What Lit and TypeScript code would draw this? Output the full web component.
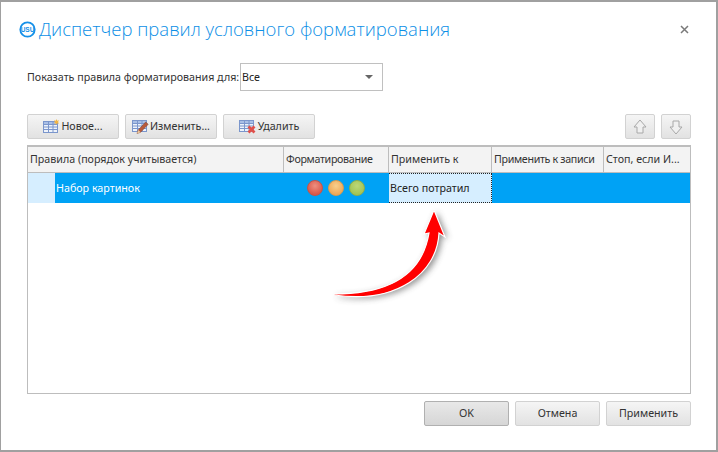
import { LitElement, html, css, svg } from "lit";
import { customElement } from "lit/decorators.js";

const tableBase = svg`<rect x="0.5" y="2.5" width="14" height="11" fill="#eef3fb" stroke="#7b96cc"/><rect x="0.5" y="2.5" width="14" height="3" fill="#a9bfe6" stroke="#7b96cc"/><path d="M5.5 3v10M10 3v10M1 8h13M1 10.5h13" stroke="#7b96cc" fill="none"/>`;

@customElement("app-root")
export class AppRoot extends LitElement {
  static styles = css`
    :host { display: block; width: 718px; height: 452px; box-sizing: border-box; background: #fff;
      border: 1px solid #a0a0a0; border-width: 2px 2px 2px 1px; position: relative;
      font-family: "Noto Sans", "DejaVu Sans", sans-serif; font-size: 10.7px; color: #333; overflow: hidden; }
    .page { display: flex; flex-direction: column; height: 100%; padding: 0 25px 0 26px; box-sizing: border-box; }
    .title { display: flex; align-items: center; height: 54px; margin-left: -8px; flex: none; }
    .title svg { flex: none; margin-right: 3px; margin-top: 1px; }
    .title h1 { margin: 0 0 1px; font: 300 18.5px "Open Sans", sans-serif; color: #0d8fe6; white-space: nowrap; flex: 1; }
    .close { flex: none; color: #7a7a7a; margin-right: -1px; display: flex; }
    .filter { display: flex; align-items: center; margin-top: 7px; height: 28px; flex: none; }
    .filter label { width: 213px; white-space: nowrap; padding-bottom: 1px; }
    .select { width: 143px; height: 28px; box-sizing: border-box; border: 1px solid #c0c0c0; display: flex; align-items: center;
      justify-content: space-between; padding: 0 9px 0 1px; color: #222; }
    .caret { width: 0; height: 0; border-left: 4px solid transparent; border-right: 4px solid transparent; border-top: 4px solid #666; }
    .toolbar { display: flex; gap: 6px; margin-top: 23px; flex: none; }
    .spacer { flex: 1; }
    .btn { height: 25px; box-sizing: border-box; border: 1px solid #d2d2d2; border-radius: 2px; display: flex; align-items: center;
      justify-content: center; background: linear-gradient(#f5f5f5, #e2e2e2); color: #333; white-space: nowrap; padding-bottom: 1px; }
    .tool { width: 92px; gap: 1px; }
    .arrow { width: 30px; padding-bottom: 0; }
    .table { margin-top: 6px; flex: none; height: 249px; box-sizing: border-box; border: 1px solid #bdbdbd; border-top-width: 2px; }
    .row { display: grid; grid-template-columns: 256px 105px 103px 112px 86px; }
    .head { height: 26px; box-sizing: border-box; background: #f3f3f3; border-bottom: 1px solid #bdbdbd; }
    .head div { border-right: 1px solid #bdbdbd; display: flex; align-items: center; padding: 0 0 1px 2px; white-space: nowrap; overflow: hidden; color: #333; }
    .head div:last-child { border-right: 0; }
    .head .tight { letter-spacing: -0.33px; }
    .sel { height: 30px; background: #00a2f5; display: grid; grid-template-columns: 27px 229px 105px 103px 198px; }
    .sel > div { display: flex; align-items: center; }
    .ind { background: #d6eeff; }
    .name { color: #fff; padding: 0 0 1px 1px; }
    .icons { justify-content: center; gap: 5px; padding-right: 1px; }
    .dot { width: 16px; height: 16px; border-radius: 50%; box-sizing: border-box; }
    .r { background: radial-gradient(circle at 50% 35%, #ee8f80, #d95a4c 70%); border: 1px solid #c75347; }
    .o { background: radial-gradient(circle at 50% 35%, #f8cf8c, #eeaa5a 70%); border: 1px solid #d99b50; }
    .g { background: radial-gradient(circle at 50% 35%, #bcd877, #a3c557 70%); border: 1px solid #8fae4b; }
    .cell { background: #d6eeff; color: #222; padding: 0 0 1px 1px; box-sizing: border-box; border: 1px dotted #222; border-width: 1px 1px 1px 0; }
    .footer { display: flex; gap: 6px; justify-content: flex-end; margin-top: 7px; flex: none; }
    .foot { width: 85px; }
    .ok { background: linear-gradient(#e8e8e8, #d6d6d6); border-color: #b0b0b0; }
    .overlay { position: absolute; left: 324px; top: 198px; pointer-events: none; overflow: visible; }
  `;

  render() {
    const d = "M333 292C378 292 420 280 428 231L423 232L433 208L444 235L438 231C436 272 395 302 333 293Z";
    return html`<div class="page">
      <div class="title">
        <svg width="17" height="17" viewBox="0 0 17 17"><circle cx="8.5" cy="8.5" r="7.2" fill="#fff" stroke="#1590e8" stroke-width="1.8"/><text x="8.5" y="11" text-anchor="middle" font-size="6.5" font-weight="700" font-family="Liberation Sans" fill="#1590e8">USU</text></svg>
        <h1>Диспетчер правил условного форматирования</h1>
        <span class="close"><svg width="9" height="9" viewBox="0 0 9 9"><path d="M1 1l7 7M8 1l-7 7" stroke="currentColor" stroke-width="1.5"/></svg></span>
      </div>
      <div class="filter"><label>Показать правила форматирования для:</label>
        <div class="select"><span>Все</span><span class="caret"></span></div></div>
      <div class="toolbar">
        <div class="btn tool"><svg width="17" height="15" viewBox="0 0 17 15">${tableBase}<path d="M13.5 0l.7 1.8 1.8-.6-.9 1.8.9 1.8-1.8-.6-.7 1.8-.7-1.8-1.8.6.9-1.8-.9-1.8 1.8.6z" fill="#f2b544"/></svg>Новое...</div>
        <div class="btn tool"><svg width="17" height="16" viewBox="0 0 17 16">${tableBase}<path d="M5 15.5l1.2-3.5 7.5-8 2.5 2.3-7.6 8z" fill="#b85a3c" stroke="#7a3d2c" stroke-width=".5"/><path d="M5 15.5l1.2-3.5 2.5 2.3z" fill="#e8c9a0"/></svg>Изменить...</div>
        <div class="btn tool"><svg width="18" height="16" viewBox="0 0 18 16">${tableBase}<path d="M9.5 8.5l6 6M15.5 8.5l-6 6" stroke="#e0504a" stroke-width="2.8"/></svg>Удалить</div>
        <div class="spacer"></div>
        <div class="btn arrow"><svg width="14" height="16" viewBox="0 0 14 16"><path d="M7 1l6 7h-3v6H4V8H1z" fill="#f0f0f0" stroke="#a8a8a8"/></svg></div>
        <div class="btn arrow"><svg width="14" height="16" viewBox="0 0 14 16"><path d="M7 15l6-7h-3V2H4v6H1z" fill="#f0f0f0" stroke="#a8a8a8"/></svg></div>
      </div>
      <div class="table">
        <div class="row head"><div>Правила (порядок учитывается)</div><div class="tight">Форматирование</div><div>Применить к</div><div class="tight">Применить к записи</div><div>Стоп, если И...</div></div>
        <div class="sel"><div class="ind"></div><div class="name">Набор картинок</div>
          <div class="icons"><span class="dot r"></span><span class="dot o"></span><span class="dot g"></span></div>
          <div class="cell">Всего потратил</div><div></div></div>
      </div>
      <div class="footer"><div class="btn foot ok">OK</div><div class="btn foot">Отмена</div><div class="btn foot">Применить</div></div>
    </div>
    <svg class="overlay" width="130" height="100" viewBox="324 198 130 100">
      <defs><filter id="s" x="-30%" y="-30%" width="160%" height="160%"><feGaussianBlur stdDeviation="3"/></filter></defs>
      <path d="${d}" fill="#444" opacity=".6" filter="url(#s)" transform="translate(3 2)"/>
      <path d="${d}" fill="#f00" stroke="#fff" stroke-width="1.2"/>
    </svg>`;
  }
}
